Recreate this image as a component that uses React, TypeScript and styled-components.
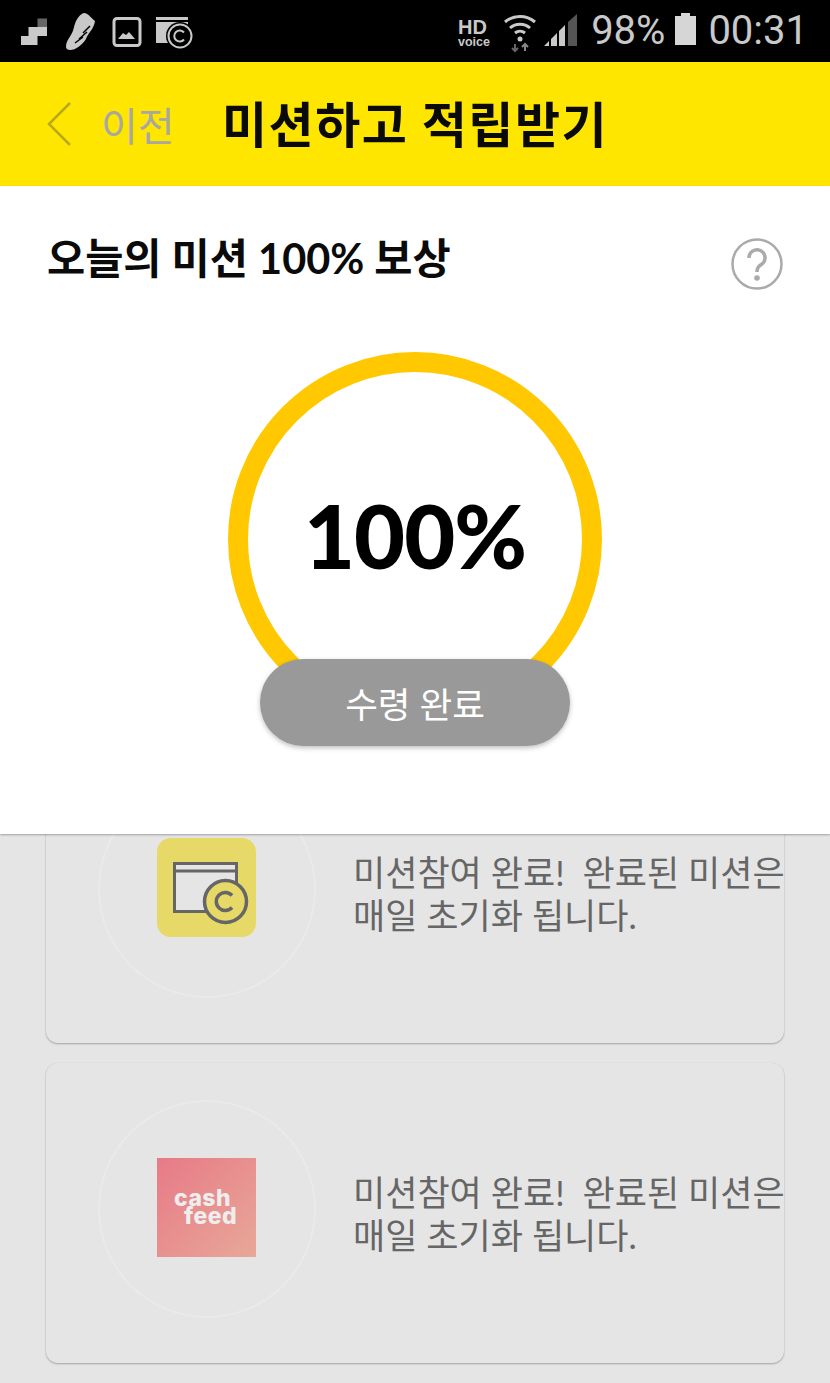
import React from "react";
import styled, { createGlobalStyle } from "styled-components";

const GlobalStyle = createGlobalStyle`
  html, body {
    margin: 0;
    padding: 0;
    background: #e5e5e5;
  }
  * {
    box-sizing: border-box;
  }
`;

const KR = `Lato, "Noto Sans CJK KR", sans-serif`;

const Screen = styled.div`
  width: 830px;
  height: 1383px;
  display: flex;
  flex-direction: column;
  overflow: hidden;
  font-family: ${KR};
`;

const StatusBar = styled.div`
  height: 62px;
  flex: none;
  background: #000;
  display: flex;
  align-items: center;
  justify-content: space-between;
  padding: 0 22px 0 20px;
  color: #c9c9c9;
`;

const StatusGroup = styled.div`
  display: flex;
  align-items: center;
`;

const StatusText = styled.span<{ $left: number }>`
  font-family: Roboto, sans-serif;
  font-size: 40px;
  line-height: 62px;
  margin-left: ${(p) => p.$left}px;
`;

const BatterySvg = styled.svg`
  margin: 0 0 4px 10px;
`;

const Header = styled.div`
  height: 124px;
  flex: none;
  background: #ffe600;
  display: flex;
  align-items: center;
  padding-left: 46px;
`;

const BackLabel = styled.span`
  font-size: 40px;
  color: #a8a8a0;
  margin-left: 29px;
  width: 121px;
`;

const Title = styled.h1`
  margin: 0 0 5px;
  font-size: 49px;
  letter-spacing: 1.5px;
  font-weight: 700;
  color: #0a0a0a;
`;

const Panel = styled.div`
  height: 648px;
  flex: none;
  background: #fff;
  position: relative;
  z-index: 1;
  padding: 46px 47px 0;
  box-shadow: 0 1px 2px rgba(0, 0, 0, 0.3);
`;

const PanelHead = styled.div`
  display: flex;
  align-items: flex-start;
  justify-content: space-between;
`;

const PanelTitle = styled.h2`
  margin: 0;
  font-size: 41.5px;
  line-height: 52px;
  font-weight: 700;
  color: #0a0a0a;
`;

const HelpIcon = styled.svg`
  margin: 6px 0 0;
`;

const Gauge = styled.div`
  width: 374px;
  height: 374px;
  margin: 62px auto 0;
  padding-bottom: 8px;
  border: 20px solid #ffc800;
  border-radius: 50%;
  display: flex;
  align-items: center;
  justify-content: center;
`;

const Percent = styled.span`
  font-size: 88px;
  font-weight: 900;
  color: #000;
  letter-spacing: -1px;
`;

const DoneButton = styled.button`
  position: absolute;
  left: 260px;
  top: 473px;
  width: 310px;
  height: 87px;
  border: none;
  border-radius: 44px;
  background: #999;
  color: #fff;
  font-family: ${KR};
  font-size: 35.5px;
  box-shadow: 0 2px 5px rgba(0, 0, 0, 0.25);
`;

const List = styled.div`
  flex: 1;
  min-height: 0;
  overflow: hidden;
  display: flex;
  flex-direction: column;
  justify-content: flex-end;
  gap: 20px;
  padding: 0 46px 20px;
`;

const Card = styled.div`
  flex: none;
  height: 300px;
  background: #e5e5e5;
  border-radius: 12px;
  box-shadow: 0 1px 2px rgba(0, 0, 0, 0.28), 0 0 1px rgba(0, 0, 0, 0.08);
  display: flex;
  align-items: flex-start;
  padding: 37px 0 0 52px;
  overflow: hidden;
`;

const LogoCircle = styled.div`
  width: 218px;
  height: 218px;
  flex: none;
  padding: 0 1px 4px 0;
  border-radius: 50%;
  border: 2px solid #eaeaea;
  display: flex;
  align-items: center;
  justify-content: center;
`;

const YellowLogo = styled.div`
  width: 99px;
  height: 99px;
  border-radius: 14px;
  background: #e6d968;
`;

const FeedLogo = styled.div`
  width: 99px;
  height: 99px;
  background: linear-gradient(135deg, #e77a87, #e8a898);
  color: #eee;
  display: flex;
  flex-direction: column;
  align-items: center;
  justify-content: center;
  font-family: Inter, sans-serif;
  font-weight: 800;
  font-size: 23px;
  line-height: 18px;
  letter-spacing: 0.4px;
`;

const FeedWord = styled.span<{ $shift: number }>`
  margin-left: ${(p) => p.$shift}px;
`;

const CardText = styled.p`
  margin: 0 0 0 37px;
  padding-top: 71px;
  font-size: 35px;
  line-height: 43px;
  color: #666;
  white-space: pre;
  overflow: hidden;
`;

const StatusIconsLeft = () => (
  <svg width="175" height="44" viewBox="0 0 175 44">
    <path d="M1 27h7.500v-9H27v9H17.500v9H1z" fill="#c9c9c9" />
    <path d="M17.500 9.500H27V18h-9.500z" fill="#666" />
    <path
      d="M46 38C46 30 52 28 54 18C56 10 60 5 64 4C68 4 70 8 75 12C74 20 68 24 66 30C62 36 56 41 50 41C48 41 46 40 46 38z"
      fill="#c9c9c9"
    />
    <path d="M55 34l8-6M59 30l8-7M63 24l7-7" stroke="#000" strokeWidth="1.5" fill="none" />
    <rect x="94" y="9.500" width="26" height="27" rx="3" fill="none" stroke="#c9c9c9" strokeWidth="3" />
    <path d="M98 30l5-6 3 2 3-3 6 7z" fill="#c9c9c9" />
    <path d="M136 8h32v3h-32zM136 13h32v21h-32z" fill="#c9c9c9" />
    <circle cx="160" cy="27" r="14" fill="#000" />
    <circle cx="160" cy="27" r="11.500" fill="#000" stroke="#c9c9c9" strokeWidth="2" />
    <path d="M164 23.500a5.500 5.500 0 1 0 0 7" fill="none" stroke="#c9c9c9" strokeWidth="2" />
  </svg>
);

const StatusIconsRight = () => (
  <svg width="122" height="44" viewBox="0 0 122 44">
    <text x="0" y="25" fontFamily="Liberation Sans" fontWeight="700" fontSize="20" fill="#c9c9c9">
      HD
    </text>
    <text x="0" y="37" fontFamily="Liberation Sans" fontWeight="700" fontSize="12.500" fill="#c9c9c9">
      voice
    </text>
    <path
      d="M47 13a23 23 0 0 1 30 0M52 19a15 15 0 0 1 20 0M57 24a8 8 0 0 1 10 0"
      fill="none"
      stroke="#c9c9c9"
      strokeWidth="3"
    />
    <circle cx="62" cy="30" r="2.500" fill="#c9c9c9" />
    <path d="M57 35v7M54 39l3 3 3-3" stroke="#666" strokeWidth="2" fill="none" />
    <path d="M67 42v-7M64 38l3-3 3 3" stroke="#888" strokeWidth="2" fill="none" />
    <path d="M86 37l5-5v5zM93 37v-7l6-6v13zM101 37V22l6-6v21z" fill="#c9c9c9" />
    <path d="M110 37V13l9-8v32z" fill="#555" />
  </svg>
);

const BatteryIcon = () => (
  <BatterySvg width="21" height="32" viewBox="0 0 21 32">
    <path d="M6 0h9v3h6v29H0V3h6z" fill="#d6d6d6" />
  </BatterySvg>
);

const BackIcon = () => (
  <svg width="26" height="46" viewBox="0 0 26 46">
    <path d="M24 2L3 23l21 21" fill="none" stroke="#b8ab1c" strokeWidth="2.500" />
  </svg>
);

const WalletIcon = () => (
  <svg width="99" height="99" viewBox="0 0 99 99">
    <rect x="17.500" y="25.500" width="62" height="48" fill="#e5e5e5" stroke="#666" strokeWidth="3" />
    <path d="M17.500 33h62" stroke="#666" strokeWidth="3" />
    <circle cx="68.500" cy="63.500" r="21" fill="#e6d968" stroke="#666" strokeWidth="3.500" />
    <path d="M75 57.500a9 9 0 1 0 0 12" fill="none" stroke="#666" strokeWidth="3.500" />
  </svg>
);

const MissionText = () => (
  <CardText>{"미션참여 완료!  완료된 미션은\n매일 초기화 됩니다."}</CardText>
);

export default function App() {
  return (
    <Screen>
      <GlobalStyle />
      <StatusBar>
        <StatusGroup>
          <StatusIconsLeft />
        </StatusGroup>
        <StatusGroup>
          <StatusIconsRight />
          <StatusText $left={11}>98%</StatusText>
          <BatteryIcon />
          <StatusText $left={12}>00:31</StatusText>
        </StatusGroup>
      </StatusBar>

      <Header>
        <BackIcon />
        <BackLabel>이전</BackLabel>
        <Title>미션하고 적립받기</Title>
      </Header>

      <Panel>
        <PanelHead>
          <PanelTitle>오늘의 미션 100% 보상</PanelTitle>
          <HelpIcon width="52" height="52" viewBox="0 0 52 52">
            <circle cx="26" cy="26" r="24.500" fill="none" stroke="#aaa" strokeWidth="2.500" />
            <path
              d="M18 20a8 8 0 1 1 13 6c-3 2-5 3.500-5 8"
              fill="none"
              stroke="#aaa"
              strokeWidth="3.500"
            />
            <circle cx="26" cy="40" r="2.800" fill="#aaa" />
          </HelpIcon>
        </PanelHead>
        <Gauge>
          <Percent>100%</Percent>
        </Gauge>
        <DoneButton>수령 완료</DoneButton>
      </Panel>

      <List>
        <Card>
          <LogoCircle>
            <YellowLogo>
              <WalletIcon />
            </YellowLogo>
          </LogoCircle>
          <MissionText />
        </Card>
        <Card>
          <LogoCircle>
            <FeedLogo>
              <FeedWord $shift={-8}>cash</FeedWord>
              <FeedWord $shift={8}>feed</FeedWord>
            </FeedLogo>
          </LogoCircle>
          <MissionText />
        </Card>
      </List>
    </Screen>
  );
}
